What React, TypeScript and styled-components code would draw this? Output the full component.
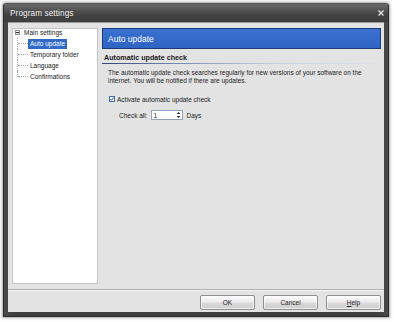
import React from 'react';
import styled, { createGlobalStyle } from 'styled-components';

const GlobalStyle = createGlobalStyle`
    html, body {
        margin: 0;
        padding: 0;
        background: #ffffff;
    }
    body {
        font-family: "Liberation Sans", Arial, sans-serif;
        color: #1e1e1e;
    }
`

type TreeItem = {
    label: string;
    selected?: boolean;
}

const children: Array<TreeItem> = [
    { label: "Auto update", selected: true },
    { label: "Temporary folder" },
    { label: "Language" },
    { label: "Confirmations" },
]

const CloseIcon = () => <svg width="6" height="6" viewBox="0 0 6 6">
    <path d="M0.5 0.5 L5.5 5.5 M5.5 0.5 L0.5 5.5" stroke="#e2e2e2" strokeWidth="1.4" />
</svg>

const CheckMark = () => <svg width="6" height="6" viewBox="0 0 6 6">
    <rect x="0.5" y="0.5" width="5" height="5" fill="#f6f8fb" stroke="#3b6ea8" strokeWidth="1" />
    <path d="M1.4 3 L2.5 4.2 L4.7 1.6" stroke="#2b4a86" strokeWidth="1" fill="none" />
</svg>

const SpinArrows = () => <svg width="5" height="8" viewBox="0 0 5 8">
    <path d="M0.5 3 L2.5 1 L4.5 3 Z" fill="#333" />
    <path d="M0.5 5 L2.5 7 L4.5 5 Z" fill="#333" />
</svg>

export default function App() {
    return <Stage>
        <GlobalStyle />
        <Window>
            <TitleBar>
                <Title>Program settings</Title>
                <CloseButton><CloseIcon /></CloseButton>
            </TitleBar>
            <Client>
                <Main>
                    <Tree>
                        <TreeList>
                            <TreeRow>
                                <Expander />
                                <RootLabel>Main settings</RootLabel>
                            </TreeRow>
                            {children.map((item, i) => <TreeRow key={item.label}>
                                <Branch last={i === children.length - 1} />
                                <ItemLabel selected={!!item.selected}>{item.label}</ItemLabel>
                            </TreeRow>)}
                        </TreeList>
                    </Tree>
                    <Page>
                        <PageHeader>Auto update</PageHeader>
                        <SectionTitle>Automatic update check</SectionTitle>
                        <SectionRule />
                        <Paragraph>
                            The automatic update check searches regularly for new versions of your software on the internet. You will be notified if there are updates.
                        </Paragraph>
                        <CheckRow>
                            <CheckMark />
                            <span>Activate automatic update check</span>
                        </CheckRow>
                        <IntervalRow>
                            <span>Check all:</span>
                            <SpinBox>
                                <SpinValue>1</SpinValue>
                                <SpinButtons><SpinArrows /></SpinButtons>
                            </SpinBox>
                            <span>Days</span>
                        </IntervalRow>
                    </Page>
                </Main>
                <Footer>
                    <Button>OK</Button>
                    <Button>Cancel</Button>
                    <Button><u>H</u>elp</Button>
                </Footer>
            </Client>
        </Window>
    </Stage>
}

const Stage = styled.div`
    width: 394px;
    height: 322px;
    padding: 3px 0 0 3px;
    box-sizing: border-box;
`

const Window = styled.div`
    width: 386px;
    height: 314px;
    box-sizing: border-box;
    display: flex;
    flex-direction: column;
    padding: 0 4px 4px 4px;
    background: linear-gradient(to right, #4a4a4a, #3e3e3e 3%, #3e3e3e 97%, #4a4a4a);
    border: 1px solid #2a2a2a;
    border-top-color: #555;
    border-radius: 3px 3px 0 0;
    box-shadow: 0 0 3px 1px rgba(0, 0, 0, 0.35);
`

const TitleBar = styled.div`
    height: 18px;
    margin: 0 -4px;
    padding: 0 4px 0 6px;
    display: flex;
    align-items: center;
    justify-content: space-between;
    background: linear-gradient(#6a6a6a 0%, #505050 40%, #434343 60%, #3e3e3e 100%);
    border-radius: 2px 2px 0 0;
`

const Title = styled.div`
    color: #ffffff;
    font-size: 8.2px;
    letter-spacing: 0.1px;
    text-shadow: 0 0 1px rgba(0, 0, 0, 0.6);
`

const CloseButton = styled.div`
    display: flex;
    align-items: center;
`

const Client = styled.div`
    flex: 1;
    display: flex;
    flex-direction: column;
    background: #e3e3e3;
    border-top: 1px solid #9c9c9c;
`

const Main = styled.div`
    flex: 1;
    display: flex;
    gap: 4px;
    padding: 5px 3px 5px 4px;
`

const Tree = styled.div`
    width: 86px;
    box-sizing: border-box;
    background: #ffffff;
    border: 1px solid #c4c4c4;
`

const TreeList = styled.div`
    margin-top: -2px;
    padding-left: 2px;
    display: flex;
    flex-direction: column;
`

const TreeRow = styled.div`
    height: 11px;
    display: flex;
    align-items: center;
    font-size: 6.5px;
`

const Expander = styled.div`
    width: 3px;
    height: 3px;
    margin-right: 4px;
    border: 1px solid #8c8c8c;
    background: linear-gradient(#ffffff, #e4e4e4);
    position: relative;
    &::after {
        content: "";
        position: absolute;
        left: 0;
        right: 0;
        top: 1px;
        height: 1px;
        background: #333;
    }
`

const RootLabel = styled.span`
    color: #222;
`

const Branch = styled.div<{ last: boolean }>`
    width: 11px;
    height: 11px;
    margin-left: 2px;
    position: relative;
    &::before {
        content: "";
        position: absolute;
        left: 0;
        top: 0;
        height: ${props => props.last ? "6px" : "11px"};
        border-left: 1px dotted #a8a8a8;
    }
    &::after {
        content: "";
        position: absolute;
        left: 1px;
        right: 0;
        top: 5px;
        border-top: 1px dotted #a8a8a8;
    }
`

const ItemLabel = styled.span<{ selected: boolean }>`
    padding: 1px 2px;
    line-height: 8px;
    background: ${props => props.selected ? "#3169c6" : "transparent"};
    color: ${props => props.selected ? "#ffffff" : "#222"};
`

const Page = styled.div`
    flex: 1;
    display: flex;
    flex-direction: column;
`

const PageHeader = styled.div`
    height: 21px;
    box-sizing: border-box;
    display: flex;
    align-items: center;
    padding-left: 5px;
    background: linear-gradient(#3a70cf, #2f64c4);
    border: 1px solid #1d3a78;
    color: #ffffff;
    font-size: 8.5px;
`

const SectionTitle = styled.div`
    margin-top: 4px;
    padding-left: 2px;
    line-height: 9px;
    font-size: 7.2px;
    font-weight: bold;
    color: #1a1a1a;
`

const SectionRule = styled.div`
    height: 1px;
    margin-top: 1px;
    background: linear-gradient(to right, #2e4478, #6f86b4 25%, #c3cde0 60%, #dfe3ea);
`

const Paragraph = styled.p`
    margin: 5px 0 0 0;
    padding-left: 6px;
    max-width: 266px;
    font-size: 6.5px;
    line-height: 8px;
    color: #222;
`

const CheckRow = styled.div`
    margin-top: 10px;
    padding-left: 7px;
    height: 8px;
    display: flex;
    align-items: center;
    gap: 2px;
    font-size: 6.5px;
    color: #222;
`

const IntervalRow = styled.div`
    margin-top: 7px;
    padding-left: 17px;
    display: flex;
    align-items: center;
    gap: 3px;
    font-size: 6.5px;
    color: #222;
    & > span:last-child {
        margin-left: 1px;
    }
`

const SpinBox = styled.div`
    width: 32px;
    height: 10px;
    box-sizing: border-box;
    display: flex;
    align-items: center;
    background: #ffffff;
    border: 1px solid #8ea4c1;
`

const SpinValue = styled.span`
    flex: 1;
    padding-left: 2px;
`

const SpinButtons = styled.div`
    width: 7px;
    display: flex;
    justify-content: center;
`

const Footer = styled.div`
    height: 23px;
    box-sizing: border-box;
    display: flex;
    justify-content: flex-end;
    gap: 8px;
    padding: 5px 3px 0 0;
    border-top: 1px solid #b0b0b0;
    box-shadow: inset 0 1px 0 #f4f4f4;
`

const Button = styled.div`
    width: 55px;
    height: 15px;
    box-sizing: border-box;
    display: flex;
    align-items: center;
    justify-content: center;
    font-size: 6.5px;
    color: #222;
    border: 1px solid #8f8f8f;
    border-radius: 2px;
    background: linear-gradient(#fbfbfb 0%, #ededed 45%, #d9d9d9 55%, #cfcfcf 100%);
    box-shadow: inset 0 0 0 1px rgba(255, 255, 255, 0.6);
`
